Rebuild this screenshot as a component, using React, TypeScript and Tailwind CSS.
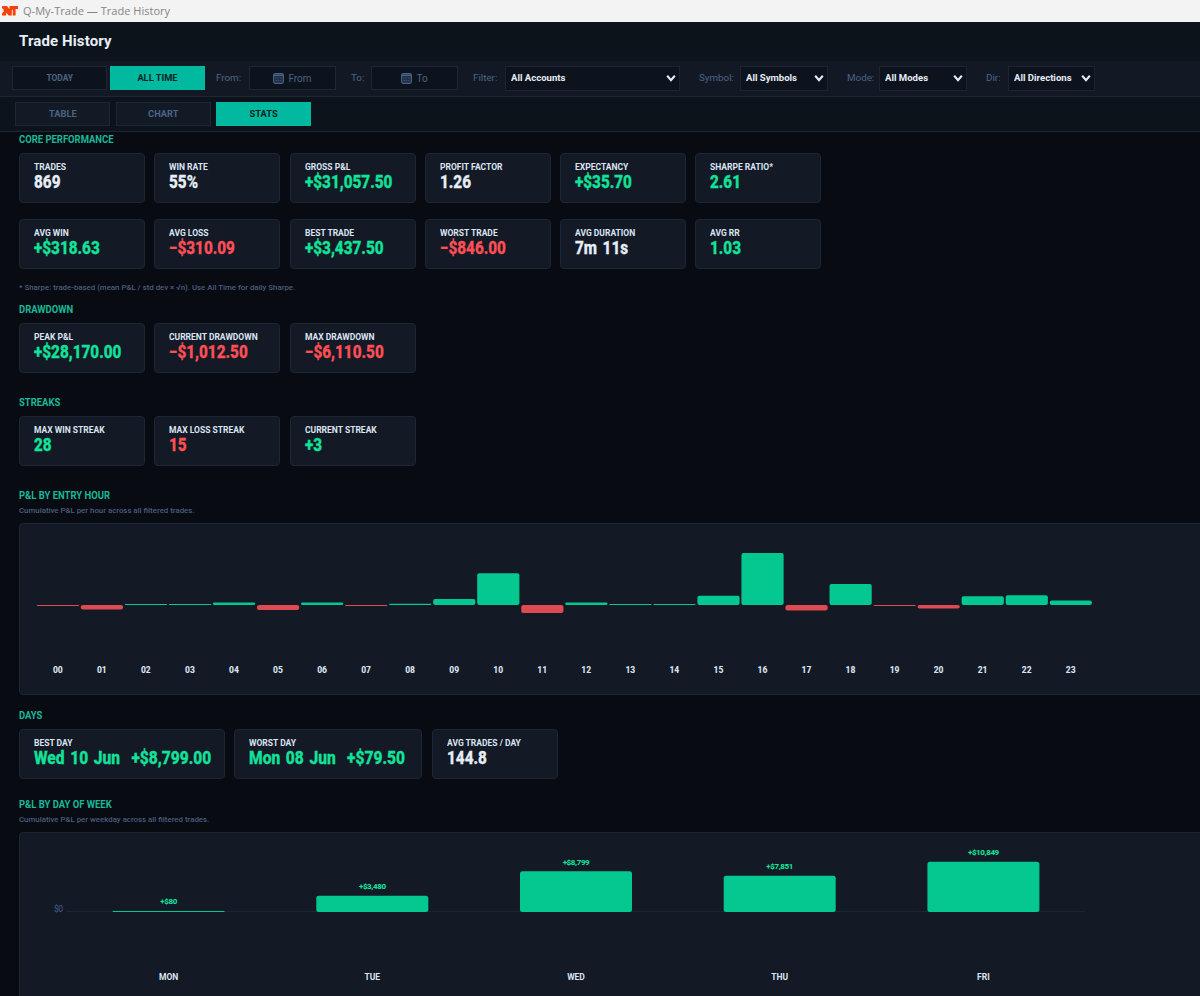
import clsx from "clsx";

type Tone = "up" | "down" | "flat";

type Stat = {
  label: string;
  value: string;
  tone: Tone;
  width?: string;
};

const toneText: Record<Tone, string> = {
  up: "text-[#12e29a]",
  down: "text-[#ff4f56]",
  flat: "text-[#e6edf7]",
};

const core: Stat[] = [
  { label: "TRADES", value: "869", tone: "flat" },
  { label: "WIN RATE", value: "55%", tone: "flat" },
  { label: "GROSS P&L", value: "+$31,057.50", tone: "up" },
  { label: "PROFIT FACTOR", value: "1.26", tone: "flat" },
  { label: "EXPECTANCY", value: "+$35.70", tone: "up" },
  { label: "SHARPE RATIO*", value: "2.61", tone: "up" },
];

const averages: Stat[] = [
  { label: "AVG WIN", value: "+$318.63", tone: "up" },
  { label: "AVG LOSS", value: "−$310.09", tone: "down" },
  { label: "BEST TRADE", value: "+$3,437.50", tone: "up" },
  { label: "WORST TRADE", value: "−$846.00", tone: "down" },
  { label: "AVG DURATION", value: "7m 11s", tone: "flat" },
  { label: "AVG RR", value: "1.03", tone: "up" },
];

const drawdown: Stat[] = [
  { label: "PEAK P&L", value: "+$28,170.00", tone: "up" },
  { label: "CURRENT DRAWDOWN", value: "−$1,012.50", tone: "down" },
  { label: "MAX DRAWDOWN", value: "−$6,110.50", tone: "down" },
];

const streaks: Stat[] = [
  { label: "MAX WIN STREAK", value: "28", tone: "up" },
  { label: "MAX LOSS STREAK", value: "15", tone: "down" },
  { label: "CURRENT STREAK", value: "+3", tone: "up" },
];

const days: Stat[] = [
  { label: "BEST DAY", value: "Wed 10 Jun  +$8,799.00", tone: "up", width: "w-[206px]" },
  { label: "WORST DAY", value: "Mon 08 Jun  +$79.50", tone: "up", width: "w-[188px]" },
  { label: "AVG TRADES / DAY", value: "144.8", tone: "flat" },
];

// bar heights in px, negative means a losing hour
const hours = [
  -1, -4.4, 1, 1, 2.6, -5, 2.6, -1, 1.3, 6, 31.7, -8, 2.6, 0.9, 0.9, 9.3, 52, -5.5, 21, -0.9, -3.6, 8.7, 9.7, 4.6,
];

const weekdays = [
  { day: "MON", label: "+$80", h: 1 },
  { day: "TUE", label: "+$3,480", h: 16.3 },
  { day: "WED", label: "+$8,799", h: 40.8 },
  { day: "THU", label: "+$7,851", h: 36.2 },
  { day: "FRI", label: "+$10,849", h: 50.2 },
];

const Logo = () => (
  <svg width="16" height="10" viewBox="0 0 16 10" className="shrink-0">
    <path
      d="M0 0H5L7.5 3.2V0H16V3H13.6V9.4H10.8V3.6L9.8 4.6V9.4H6.6L4.2 6.4V9.4H0V7.2L1.6 6V3.4L0 2.2Z"
      fill="#f4420b"
    />
  </svg>
);

const CalendarIcon = () => (
  <svg width="11" height="11" viewBox="0 0 11 11" className="shrink-0">
    <rect x="0.6" y="0.6" width="9.8" height="9.8" rx="1.6" fill="#1f2d44" stroke="#4d6385" strokeWidth="1.1" />
    <path d="M0.8 2.4H10.2" stroke="#4d6385" strokeWidth="1.4" />
    <path d="M2.5 5.2H8.5M2.5 7.6H8.5" stroke="#4d6385" strokeWidth="0.8" strokeDasharray="1.4 0.9" />
  </svg>
);

const Arrow = () => (
  <svg width="10" height="8" viewBox="0 0 10 8" className="shrink-0">
    <path d="M1.2 1.8L5 6.2L8.8 1.8" fill="none" stroke="#e6edf7" strokeWidth="2.1" />
  </svg>
);

const Toggle = ({ label, active, dark }: { label: string; active?: boolean; dark?: boolean }) => (
  <button
    className={clsx(
      "flex h-6 w-[95px] shrink-0 items-center justify-center text-[9.3px] font-bold",
      active
        ? "bg-[#00b99f] text-[#06231f]"
        : clsx("border border-[#1c2635] text-[#4d6385]", dark ? "bg-[#0d131c]" : "bg-[#121a26]"),
    )}
  >
    <span className={dark ? "origin-center scale-x-[0.9]" : undefined}>{label}</span>
  </button>
);

const FieldLabel = ({ children, className }: { children: string; className: string }) => (
  <span className={clsx("shrink-0 whitespace-nowrap text-[9.8px] text-[#4d6385]", className)}>{children}</span>
);

const DateButton = ({ label }: { label: string }) => (
  <button className="flex h-6 w-[87px] shrink-0 items-center justify-center gap-[4px] border border-[#1c2635] bg-[#0d131c] text-[10px] text-[#4d6385]">
    <CalendarIcon />
    {label}
  </button>
);

const Select = ({ label, className }: { label: string; className: string }) => (
  <button
    className={clsx(
      "flex h-[25px] shrink-0 items-center justify-between border border-[#1a2433] bg-[#0d131c] pr-[3px] pl-[5px] text-[9.8px] font-bold text-[#e6edf7]",
      className,
    )}
  >
    <span className="origin-left scale-x-[0.975] whitespace-nowrap">{label}</span>
    <Arrow />
  </button>
);

const Heading = ({ children, className }: { children: string; className?: string }) => (
  <h2 className={clsx("h-[14px] text-[10px] leading-[14px] font-bold text-[#19b898]", className)}>
    <span className="inline-block origin-left scale-x-[0.945]">{children}</span>
  </h2>
);

const Note = ({ children, className }: { children: string; className?: string }) => (
  <p className={clsx("h-3 text-[8px] leading-3 font-medium text-[#4a5d7e]", className)}>
    <span className="inline-block origin-left scale-x-[0.98]">{children}</span>
  </p>
);

const StatCard = ({ label, value, tone, width = "w-[126px]" }: Stat) => (
  <div
    className={clsx("h-[50px] shrink-0 rounded-[4px] border border-[#1c2634] bg-[#131a26] pt-[7px] pl-[14px]", width)}
  >
    <div className="h-3 origin-left scale-x-[0.945] text-[9px] leading-[13px] font-bold whitespace-nowrap text-[#dbe4f2]">
      {label}
    </div>
    <div
      className={clsx(
        "h-5 origin-left text-[17.5px] leading-[18px] font-extrabold whitespace-pre [-webkit-text-stroke:0.3px_currentColor] [word-spacing:2px]",
        value.includes("Jun") ? "scale-x-[0.89]" : "scale-x-[0.875]",
        toneText[tone],
      )}
    >
      {value}
    </div>
  </div>
);

const StatRow = ({ stats, className }: { stats: Stat[]; className?: string }) => (
  <div className={clsx("flex gap-[9.25px]", className)}>
    {stats.map((s) => (
      <StatCard key={s.label} {...s} />
    ))}
  </div>
);

const HourChart = () => (
  <svg width="1180" height="170" className="block">
    {hours.map((h, i) => {
      const x = 16.8 + i * 44.04;
      return (
        <g key={i}>
          <rect
            x={x}
            y={h > 0 ? 81 - h : 81}
            width="42.2"
            height={Math.abs(h)}
            rx={Math.min(2, Math.abs(h) / 2)}
            fill={h > 0 ? "#05c790" : "#dd4b50"}
          />
          <text x={x + 21} y="149" textAnchor="middle" className="fill-[#dbe4f2] text-[8.5px] font-extrabold">
            {String(i).padStart(2, "0")}
          </text>
        </g>
      );
    })}
  </svg>
);

const WeekdayChart = () => (
  <svg width="1180" height="170" className="block">
    <line x1="46" x2="1065" y1="78.5" y2="78.5" stroke="#1b2533" />
    <text x="34" y="79" className="fill-[#435f8a] text-[8.5px] tracking-[-0.5px]">
      $0
    </text>
    {weekdays.map((d, i) => {
      const x = 92.6 + i * 203.7;
      return (
        <g key={d.day}>
          <rect x={x} y={79 - d.h} width="112" height={d.h} rx={Math.min(2.5, d.h / 2)} fill="#05c790" />
          <text
            x={x + 56}
            y={72.4 - d.h}
            textAnchor="middle"
            className="fill-[#12e29a] text-[8px] font-extrabold tracking-[-0.4px]"
          >
            {d.label}
          </text>
          <text x={x + 56} y="146.5" textAnchor="middle" className="fill-[#dbe4f2] text-[8.5px] font-bold">
            {d.day}
          </text>
        </g>
      );
    })}
  </svg>
);

const panel = "-mr-2 rounded-[4px] border border-[#1c2634] bg-[#131a26]";

export default function App() {
  return (
    <div className="h-[996px] w-[1200px] overflow-hidden bg-[#080b12] font-[Roboto,'Open_Sans',sans-serif] text-[#e6edf7]">
      <div className="flex h-[22px] items-center gap-[5px] bg-[#f3f3f3] pl-[2px] font-['Open_Sans',sans-serif] text-[11.3px] text-[#858585]">
        <Logo />
        <span className="origin-left scale-x-[0.978]">Q-My-Trade — Trade History</span>
      </div>

      <header className="flex h-[39px] items-center bg-[#0d131b] pl-[19px]">
        <h1 className="text-[15px] font-bold tracking-[0.12px]">Trade History</h1>
      </header>

      <div className="flex h-9 items-center border-b border-[#1c2634] bg-[#121925] pb-px pl-3">
        <Toggle label="TODAY" dark />
        <div className="ml-[3px]">
          <Toggle label="ALL TIME" active />
        </div>
        <FieldLabel className="ml-[11px] w-[33px]">From:</FieldLabel>
        <DateButton label="From" />
        <FieldLabel className="ml-[15px] w-5">To:</FieldLabel>
        <DateButton label="To" />
        <FieldLabel className="ml-[15px] w-8">Filter:</FieldLabel>
        <Select label="All Accounts" className="w-[175px]" />
        <FieldLabel className="ml-[19px] w-[41px]">Symbol:</FieldLabel>
        <Select label="All Symbols" className="w-[88px]" />
        <FieldLabel className="ml-[19px] w-8">Mode:</FieldLabel>
        <Select label="All Modes" className="w-[88px]" />
        <FieldLabel className="ml-[19px] w-[22px]">Dir:</FieldLabel>
        <Select label="All Directions" className="w-[87px]" />
      </div>

      <div className="flex h-[35px] items-center gap-[5.4px] border-b border-[#1c2634] bg-[#0d131b] pl-[15.4px]">
        <Toggle label="TABLE" />
        <Toggle label="CHART" />
        <Toggle label="STATS" active />
      </div>

      <main className="pt-px pl-[19px]">
        <Heading>CORE PERFORMANCE</Heading>
        <StatRow stats={core} className="mt-[6px]" />
        <StatRow stats={averages} className="mt-4" />
        <Note className="mt-[13px]">* Sharpe: trade-based (mean P&L / std dev × √n). Use All Time for daily Sharpe.</Note>

        <Heading className="mt-[9px]">DRAWDOWN</Heading>
        <StatRow stats={drawdown} className="mt-[6px]" />

        <Heading className="mt-[23px]">STREAKS</Heading>
        <StatRow stats={streaks} className="mt-[6px]" />

        <Heading className="mt-[23px]">P&L BY ENTRY HOUR</Heading>
        <Note className="mt-[2px]">Cumulative P&L per hour across all filtered trades.</Note>
        <div className={clsx(panel, "mt-[6px] h-[172px]")}>
          <HourChart />
        </div>

        <Heading className="mt-[14px]">DAYS</Heading>
        <StatRow stats={days} className="mt-[6px]" />

        <Heading className="mt-[19px]">P&L BY DAY OF WEEK</Heading>
        <Note className="mt-[2px]">Cumulative P&L per weekday across all filtered trades.</Note>
        <div className={clsx(panel, "mt-[6px] h-[180px]")}>
          <WeekdayChart />
        </div>
      </main>
    </div>
  );
}
